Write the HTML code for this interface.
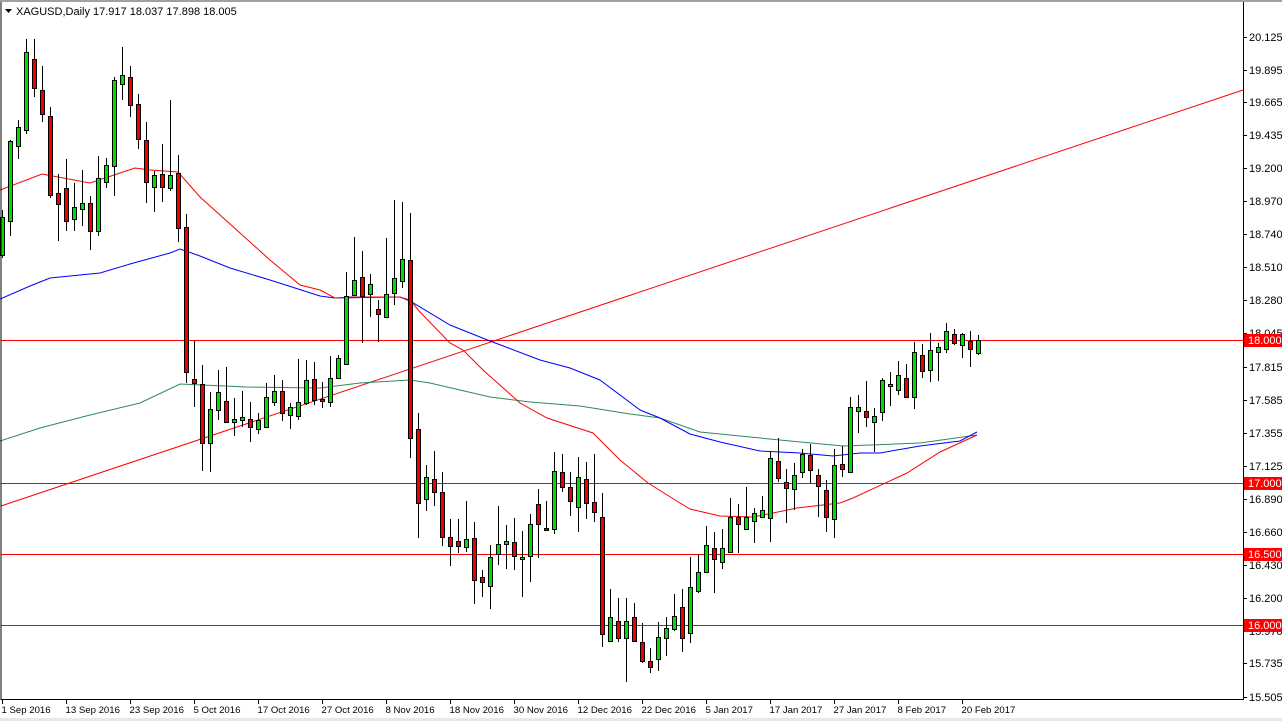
<!DOCTYPE html>
<html><head><meta charset="utf-8"><style>
html,body{margin:0;padding:0;background:#fff;width:1282px;height:721px;overflow:hidden}
svg{display:block}
text{font-family:"Liberation Sans","DejaVu Sans",sans-serif;font-size:11px;fill:#000}
text.d{font-size:9.6px}
</style></head><body>
<svg id="s" width="1282" height="721" xmlns="http://www.w3.org/2000/svg">
<rect x="0" y="0" width="1282" height="2" fill="#a0a0a0"/>
<rect x="0" y="718" width="1282" height="3" fill="#e8e8e8"/>
<g id="g"></g>
<line x1="1" y1="2" x2="1" y2="700" stroke="#000"/>
<line x1="1243.5" y1="2" x2="1243.5" y2="700" stroke="#000"/>
<line x1="1" y1="699.5" x2="1244" y2="699.5" stroke="#000"/>
<polygon points="5,9 12,9 8.5,13" fill="#000"/>
<text x="16" y="15">XAGUSD,Daily  17.917 18.037 17.898 18.005</text>
</svg>
<script>
var NS="http://www.w3.org/2000/svg",g=document.getElementById('g');
function el(t,a){var e=document.createElementNS(NS,t);for(var k in a)e.setAttribute(k,a[k]);g.appendChild(e);return e;}
function pl(pts,c){el('polyline',{points:pts,fill:'none',stroke:c,'stroke-width':1});}
[340,483,554,625].forEach(function(y){el('line',{x1:1,y1:y+.5,x2:1243,y2:y+.5,stroke:'#ff0000'});});
el('line',{x1:1,y1:506,x2:1243,y2:90,stroke:'#ff0000'});
pl("0,441 40,428 90,415 140,403 180,384 247,387 320,388 360,383 410,380 430,383 460,390 490,397 530,402 580,406 630,414 660,418 700,432 740,436 790,441 843,446 870,445 920,443 977,435","#2e8b57");
pl("0,299 30,286 50,278 100,273 130,264 170,253 180,249 200,256 230,268 270,280 320,296 335,298 400,297 410,301 450,325 490,341 540,360 570,368 600,380 640,410 660,418 690,434 720,442 760,451 800,453 833,456 860,453 880,453 920,446 960,441 977,432","#0000ff");
pl("0,190 42,174 90,183 105,178 135,168 150,170 178,172 200,197 240,233 270,260 300,285 320,290 335,298 350,297 400,297 410,300 420,312 450,343 463,350 483,370 520,403 547,418 593,433 620,460 648,483 680,503 690,509 720,516 753,517 773,513 797,508 840,503 853,498 907,473 940,452 977,435","#ff0000");
var C=[[255,217,210,258],[221,141,140,236],[146,127,120,159],[130,52,39,134],[59,88,39,97],[90,114,66,122],[116,195,107,198],[193,204,174,241],[188,221,159,231],[219,207,183,231],[209,203,170,226],[203,231,196,250],[231,178,156,236],[182,165,158,188],[166,80,77,196],[84,75,47,100],[77,105,66,117],[104,139,94,149],[140,182,122,203],[187,175,171,212],[174,187,144,202],[188,175,100,191],[173,228,155,242],[227,372,214,383],[379,383,341,407],[384,443,365,471],[443,409,392,472],[410,392,370,420],[401,422,367,423],[422,419,398,436],[420,417,391,427],[419,427,402,442],[429,420,413,434],[427,397,383,428],[402,391,375,406],[391,413,380,421],[415,407,403,429],[416,402,359,420],[403,380,360,405],[379,400,362,405],[399,401,382,408],
[402,378,356,407],[378,358,355,378],[364,296,272,364],[295,280,237,295],[277,296,251,343],[294,284,274,317],[309,314,300,342],[317,294,238,318],[293,278,200,305],[281,259,202,288],[260,438,213,458],[429,503,413,538],[499,477,465,511],[479,492,451,506],[492,537,472,546],[537,546,519,566],[541,546,519,553],[547,539,501,552],[538,580,522,604],[577,582,570,597],[586,557,545,609],[554,544,506,565],[544,541,525,569],[542,556,518,570],[559,557,531,597],[556,524,514,582],[504,524,489,558],[528,530,501,530],[529,471,452,534],[472,487,454,492],[487,501,472,516],[507,477,457,532],[479,503,462,519],[502,512,454,522],[517,634,493,647],[641,617,589,641],[621,638,598,642],[638,621,598,682],[617,641,603,641],[642,661,623,663],
[661,667,648,673],[659,637,622,671],[638,628,617,656],[629,616,594,631],[607,638,589,652],[633,587,557,643],[591,572,554,593],[572,545,526,572],[548,559,532,593],[562,548,529,569],[552,517,498,553],[517,524,504,553],[529,517,487,530],[521,513,508,543],[517,510,496,517],[518,458,452,542],[461,478,438,482],[482,488,469,523],[489,475,463,510],[472,454,449,478],[455,470,444,483],[475,486,469,517],[490,517,480,532],[519,465,449,538],[464,469,446,477],[472,407,397,473],[411,407,395,433],[411,417,381,427],[422,416,408,452],[412,380,378,421],[386,384,372,406],[390,375,361,395],[378,397,364,397],[397,352,342,409],[355,371,344,378],[370,350,333,382],[352,347,343,381],[349,331,323,353],[334,343,329,345],[345,334,333,358],[341,349,331,367],[353,340,335,355]];
C.forEach(function(c,i){var x=2.5+8*i,o=c[0],cl=c[1],up=cl<o;
 var top=Math.min(o,cl),h=Math.max(Math.abs(o-cl),1);
 el('line',{x1:x,y1:c[2],x2:x,y2:c[3],stroke:'#000'});
 el('rect',{x:x-2,y:top+.5,width:4,height:h,fill:up?'#00dd00':'#ee0000',stroke:'#000','stroke-width':1});
});
var L=[["20.125",37],["19.895",70],["19.665",102],["19.435",135],["19.200",168],["18.970",201],["18.740",234],["18.510",267],["18.280",300],["18.045",333],["17.815",367],["17.585",400],["17.355",433],["17.125",466],["16.890",499],["16.660",532],["16.430",565],["16.200",598],["15.970",631],["15.735",663],["15.505",697]];
L.forEach(function(l){el('line',{x1:1244,y1:l[1]+.5,x2:1247,y2:l[1]+.5,stroke:'#000'});var t=el('text',{x:1249,y:l[1]+4});t.textContent=l[0];});
[["18.000",340],["17.000",483],["16.500",554],["16.000",625]].forEach(function(l){el('rect',{x:1244,y:l[1]-6,width:38,height:13,fill:'#ff0000'});var t=el('text',{x:1248,y:l[1]+4,style:'fill:#fff'});t.textContent=l[0];});
var D=["1 Sep 2016","13 Sep 2016","23 Sep 2016","5 Oct 2016","17 Oct 2016","27 Oct 2016","8 Nov 2016","18 Nov 2016","30 Nov 2016","12 Dec 2016","22 Dec 2016","5 Jan 2017","17 Jan 2017","27 Jan 2017","8 Feb 2017","20 Feb 2017"];
D.forEach(function(d,i){var x=2.5+64*i;el('line',{x1:x,y1:700,x2:x,y2:704,stroke:'#000'});var t=el('text',{x:x-1,y:713,'class':'d'});t.textContent=d;});
</script>
</body></html>
